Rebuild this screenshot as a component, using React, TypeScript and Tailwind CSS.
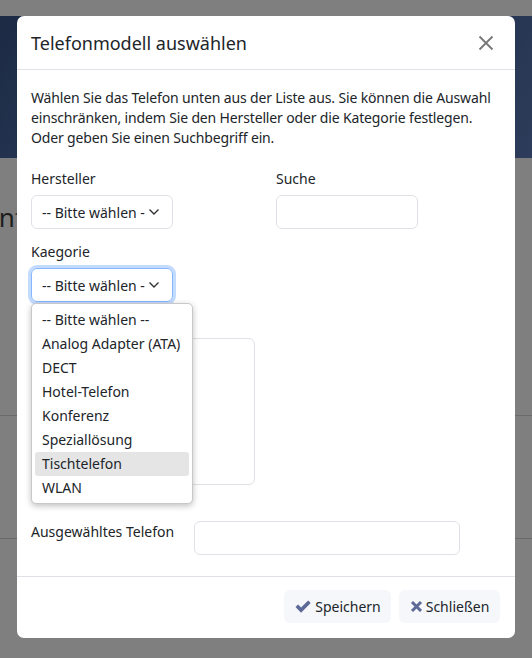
import React from "react";

const font = { fontFamily: '"Noto Sans", "Open Sans", sans-serif' };

function Chevron() {
  return (
    <svg width="12" height="8" viewBox="0 0 12 8" fill="none" stroke="#333" strokeWidth="1.4">
      <path d="M1.5 1.5 L6 6 L10.5 1.5" />
    </svg>
  );
}

function Check() {
  return (
    <svg width="18" height="15" viewBox="0 0 16 14">
      <path d="M1 7.5 L3.4 5.2 L6.2 8 L12.8 1.4 L15.2 3.8 L6.2 12.8 Z" fill="#5d6a98" />
    </svg>
  );
}

function Cross() {
  return (
    <svg width="13" height="13" viewBox="0 0 13 13">
      <path d="M2 2 L11 11 M11 2 L2 11" stroke="#5d6a98" strokeWidth="3" strokeLinecap="butt" />
    </svg>
  );
}

const options = [
  "-- Bitte wählen --",
  "Analog Adapter (ATA)",
  "DECT",
  "Hotel-Telefon",
  "Konferenz",
  "Speziallösung",
  "Tischtelefon",
  "WLAN",
];

export default function App() {
  return (
    <div className="relative w-[532px] h-[658px] overflow-hidden bg-[#7f7f7f]" style={font}>
      {/* background page */}
      <div className="flex flex-col">
        <div className="h-[16px]" />
        <div className="h-[142px] bg-[linear-gradient(120deg,#1c2a44_0%,#2a3a58_30%,#1f2d47_60%,#2c3c5a_100%)]" />
        <div className="h-[39px]" />
        <div className="text-[26px] leading-[40px] text-[#1e1e1e] -ml-[33px] whitespace-nowrap">Konfiguration</div>
        <div className="h-[178px]" />
        <div className="h-px bg-[#6a6a6a]" />
        <div className="h-[122px]" />
        <div className="h-px bg-[#6a6a6a]" />
      </div>

      {/* modal */}
      <div className="absolute left-[17px] top-[16px] w-[498px] h-[622px] bg-white rounded-[7px] flex flex-col text-[#212529]">
        <div className="h-[54px] border-b border-[#dee2e6] flex items-center justify-between pl-[14px] pr-[15px]">
          <div className="text-[18px] leading-[24px]">Telefonmodell auswählen</div>
          <svg width="16" height="16" viewBox="0 0 16 16" className="mr-[6px]">
            <path d="M1.5 1.5 L14.5 14.5 M14.5 1.5 L1.5 14.5" stroke="#777" strokeWidth="1.8" />
          </svg>
        </div>

        <div className="flex-1 px-[14px] pt-[18px] relative text-[14px]">
          <p className="leading-[20px] tracking-[-0.15px]">
            Wählen Sie das Telefon unten aus der Liste aus. Sie können die Auswahl einschränken, indem Sie den
            Hersteller oder die Kategorie festlegen. Oder geben Sie einen Suchbegriff ein.
          </p>

          <div className="mt-[21px] grid grid-cols-[245px_1fr]">
            <div className="flex flex-col">
              <div className="leading-[20px]">Hersteller</div>
              <div className="mt-[6px] w-[142px] h-[34px] border border-[#dee2e6] rounded-[6px] flex items-center justify-between pl-[10px] pr-[12px]">
                <span className="text-[14px] whitespace-nowrap overflow-hidden">-- Bitte wählen -</span>
                <Chevron />
              </div>
            </div>
            <div className="flex flex-col">
              <div className="leading-[20px]">Suche</div>
              <div className="mt-[6px] w-[142px] h-[34px] border border-[#dee2e6] rounded-[6px]" />
            </div>
          </div>

          <div className="mt-[13px] flex flex-col">
            <div className="leading-[20px]">Kaegorie</div>
            <div className="mt-[6px] w-[142px] h-[34px] border border-[#86b7fe] rounded-[6px] shadow-[0_0_0_3px_rgba(13,110,253,0.25)] flex items-center justify-between pl-[10px] pr-[12px]">
              <span className="whitespace-nowrap overflow-hidden">-- Bitte wählen -</span>
              <Chevron />
            </div>
          </div>

          <div className="mt-[36px] w-[224px] h-[147px] border border-[#dee2e6] rounded-[6px]" />

          <div className="mt-[36px] flex items-center">
            <div className="w-[163px] leading-[20px] -mt-[12px]">Ausgewähltes Telefon</div>
            <div className="w-[266px] h-[34px] border border-[#dee2e6] rounded-[6px]" />
          </div>

          {/* dropdown popup */}
          <div className="absolute left-[14px] top-[233px] w-[162px] h-[201px] bg-white border border-[#c8c8c8] rounded-[5px] shadow-[0_2px_6px_rgba(0,0,0,0.25)] py-[4px] px-[3px]">
            {options.map((o) => (
              <div
                key={o}
                className={`h-[24px] leading-[24px] px-[7px] rounded-[3px] whitespace-nowrap text-[14px] ${
                  o === "Tischtelefon" ? "bg-[#e5e5e5]" : ""
                }`}
              >
                {o}
              </div>
            ))}
          </div>
        </div>

        <div className="h-[62px] border-t border-[#dee2e6] flex items-center justify-end gap-[8px] pr-[15px] pb-[2px]">
          <div className="h-[33px] w-[107px] bg-[#f5f7fa] rounded-[6px] flex items-center justify-center gap-[3px] text-[14px]">
            <Check />
            <span>Speichern</span>
          </div>
          <div className="h-[33px] w-[101px] bg-[#f5f7fa] rounded-[6px] flex items-center justify-center gap-[3px] text-[14px]">
            <Cross />
            <span>Schließen</span>
          </div>
        </div>
      </div>
    </div>
  );
}
